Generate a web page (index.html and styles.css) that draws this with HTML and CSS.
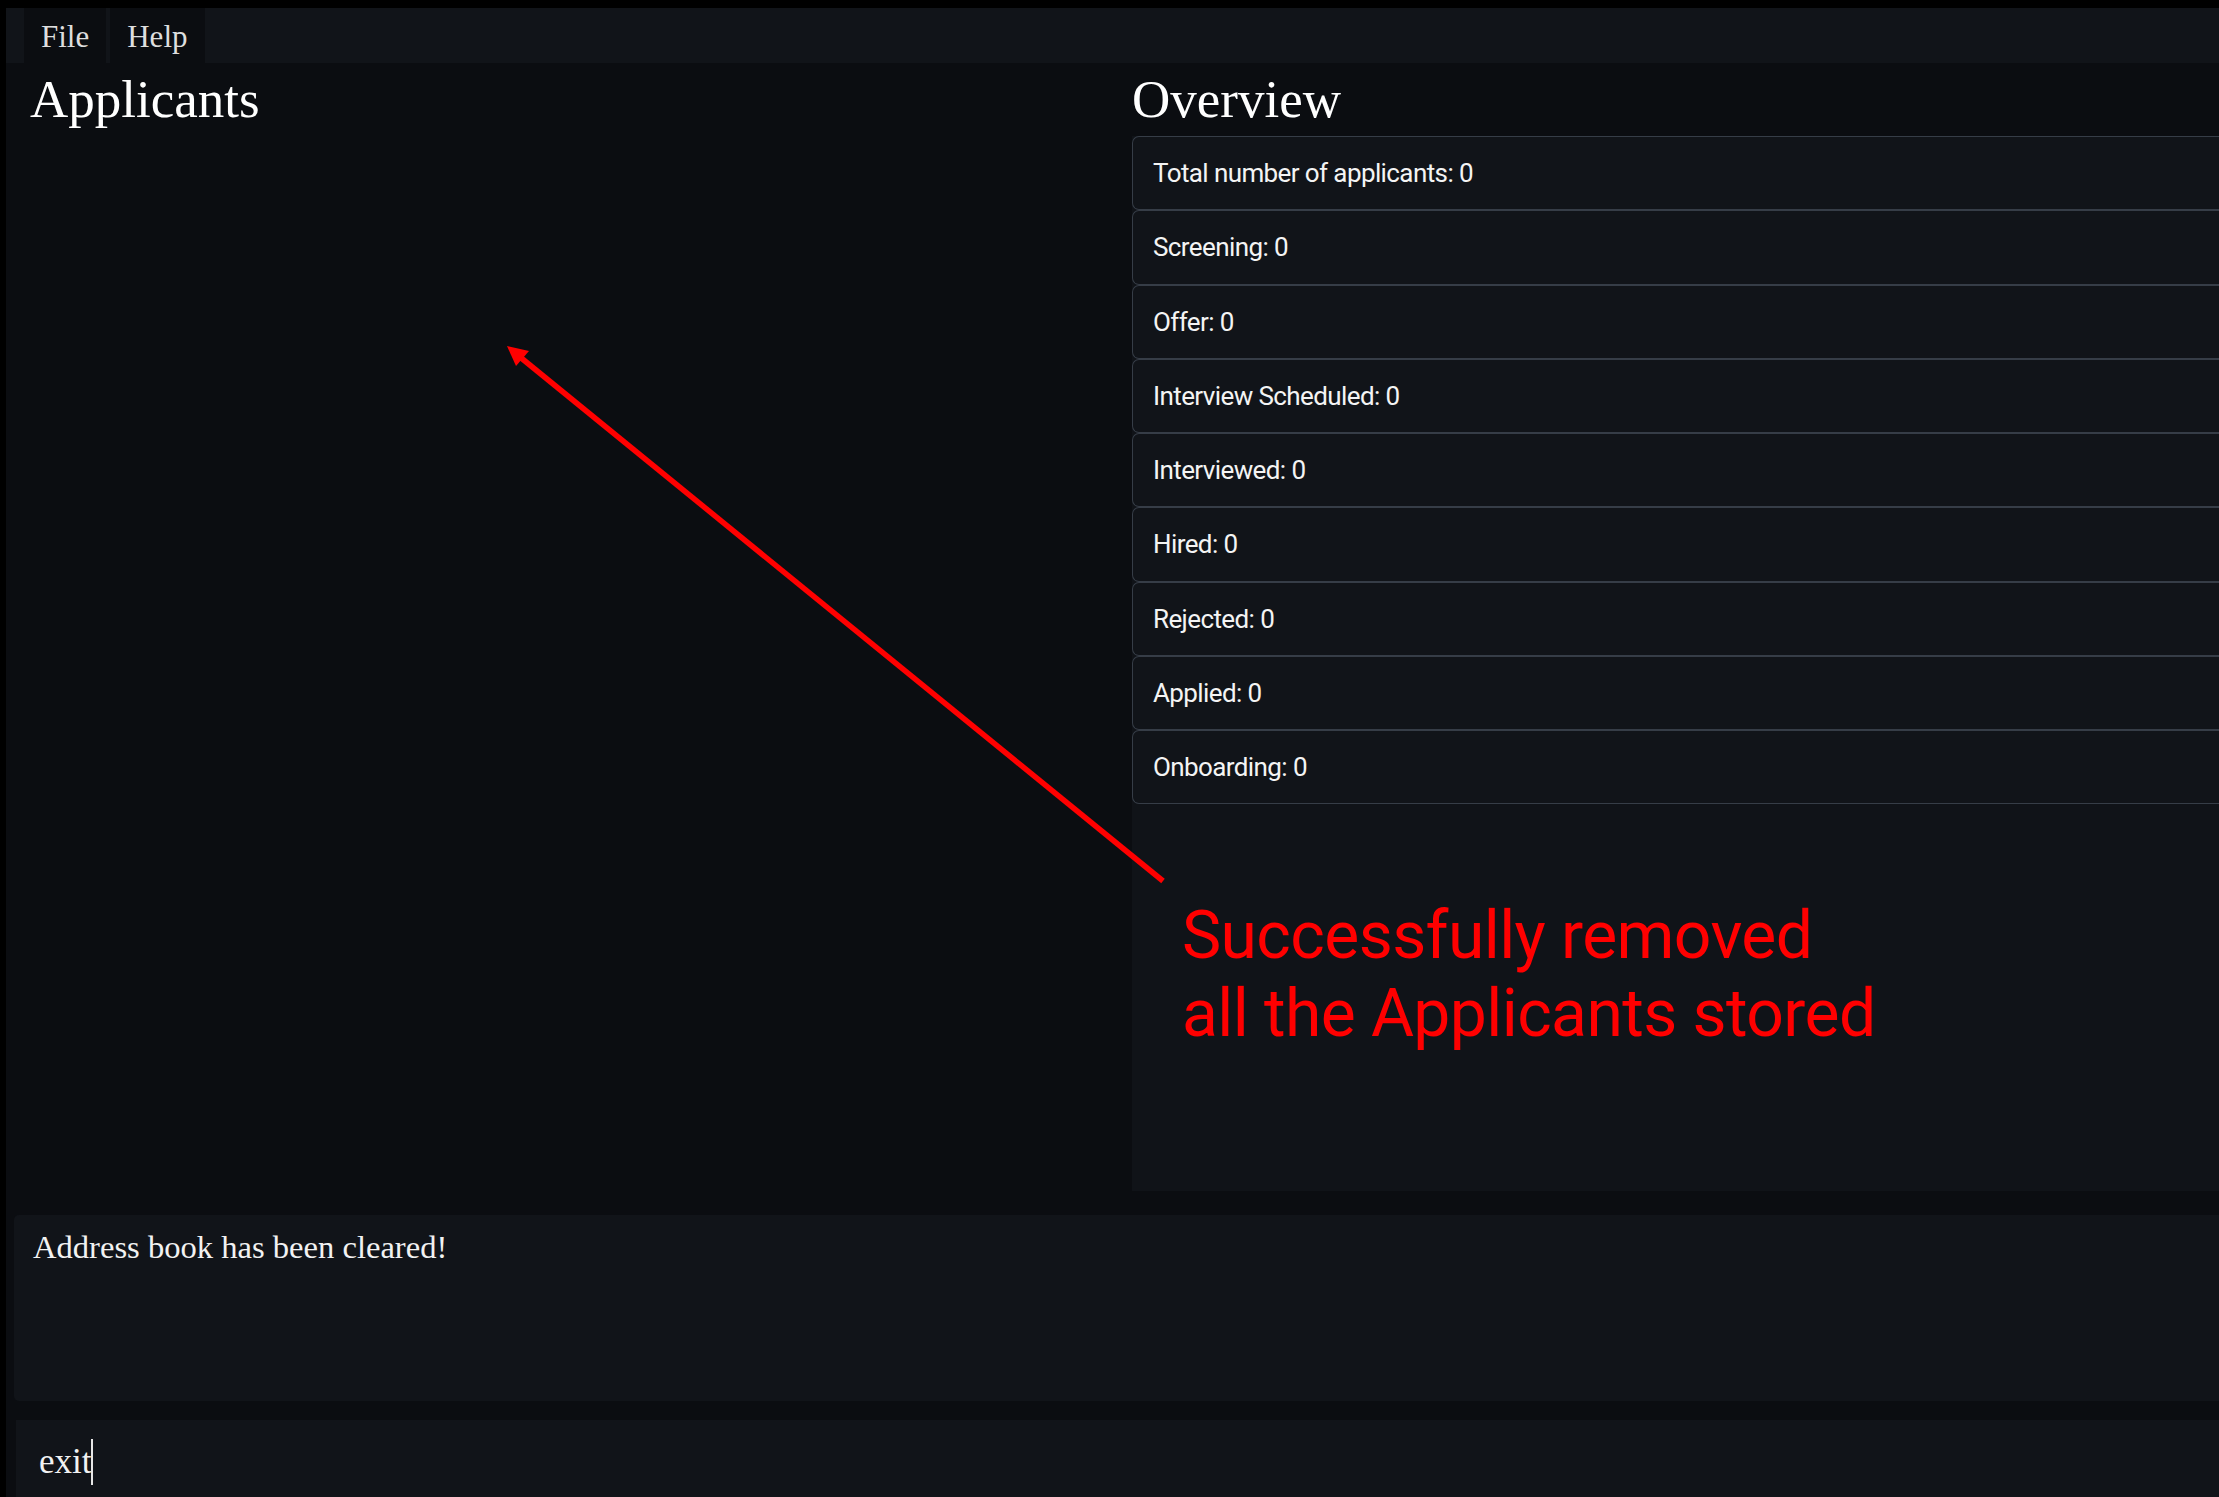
FILE: index.html
```html
<!DOCTYPE html>
<html lang="en">
<head>
<meta charset="utf-8">
<title>Applicants</title>
<link rel="stylesheet" href="styles.css">
</head>
<body>
<div class="app">
  <nav class="menubar">
    <div class="menu-item">File</div>
    <div class="menu-item">Help</div>
  </nav>
  <div class="main">
    <section class="pane pane-left">
      <h2 class="pane-title">Applicants</h2>
    </section>
    <section class="pane pane-right">
      <h2 class="pane-title">Overview</h2>
      <div class="stat-list">
        <div class="stat-card">Total number of applicants: 0</div>
        <div class="stat-card">Screening: 0</div>
        <div class="stat-card">Offer: 0</div>
        <div class="stat-card">Interview Scheduled: 0</div>
        <div class="stat-card">Interviewed: 0</div>
        <div class="stat-card">Hired: 0</div>
        <div class="stat-card">Rejected: 0</div>
        <div class="stat-card">Applied: 0</div>
        <div class="stat-card">Onboarding: 0</div>
      </div>
    </section>
  </div>
  <div class="result-box">Address book has been cleared!</div>
  <div class="command-box"><span class="command-text">exit</span><span class="caret"></span></div>
</div>

<svg class="annot-arrow" width="2219" height="1497" viewBox="0 0 2219 1497" xmlns="http://www.w3.org/2000/svg">
  <line x1="1163" y1="881" x2="520" y2="357" stroke="#ff0000" stroke-width="5.5"/>
  <polygon points="507,346 529,351 516,366" fill="#ff0000"/>
</svg>
<div class="annot-text">
  <div class="annot-line">Successfully removed</div>
  <div class="annot-line">all the Applicants stored</div>
</div>
</body>
</html>
```

FILE: styles.css
```css
html, body {
  margin: 0;
  padding: 0;
  background: #000000;
}

body {
  position: relative;
  width: 2219px;
  height: 1497px;
  overflow: hidden;
}

.app {
  margin: 8px 0 0 6px;
  height: 1489px;
  background: #0b0d11;
  display: flex;
  flex-direction: column;
  font-family: "Liberation Serif", "DejaVu Serif", serif;
  color: #ffffff;
}

.menubar {
  display: flex;
  gap: 4px;
  height: 55px;
  padding-left: 18px;
  background: #111419;
  flex: none;
}

.menu-item {
  padding: 3px 17px 0 17px;
  background: #0b0d11;
  color: #dedede;
  font-size: 31px;
  line-height: 52px;
}

.main {
  display: grid;
  grid-template-columns: 1126px 1fr;
  height: 1128px;
  flex: none;
}

.pane-title {
  margin: 0;
  font-weight: normal;
  font-size: 53px;
  line-height: 73px;
  color: #ffffff;
}

.pane-left {
  padding-left: 24px;
}

.pane-right {
  display: flex;
  flex-direction: column;
}

.stat-list {
  flex: 1;
  background: #101318;
  display: flex;
  flex-direction: column;
}

.stat-card {
  box-sizing: border-box;
  height: 74.25px;
  flex: none;
  display: flex;
  align-items: center;
  padding-left: 20px;
  border: 1px solid #363d47;
  border-right: none;
  border-radius: 7px 0 0 7px;
  background: #111419;
  font-family: Roboto, "Liberation Sans", sans-serif;
  font-size: 26px;
  letter-spacing: -0.6px;
  color: #f4f4f4;
}

.result-box {
  margin: 24px 0 0 8px;
  height: 186px;
  box-sizing: border-box;
  padding: 12px 19px;
  background: #111419;
  border-radius: 5px 0 0 5px;
  font-size: 32.6px;
  line-height: 40px;
  color: #f2f2f2;
  flex: none;
}

.command-box {
  margin: 19px 0 0 10px;
  flex: 1;
  background: #111419;
  display: flex;
  align-items: flex-start;
  padding: 17px 0 0 23px;
}

.command-text {
  font-size: 35px;
  line-height: 50px;
  color: #f2f2f2;
}

.caret {
  display: inline-block;
  width: 2px;
  height: 46px;
  margin-top: 2px;
  background: #e6e6e6;
}

.annot-arrow {
  position: absolute;
  left: 0;
  top: 0;
  pointer-events: none;
}

.annot-text {
  position: absolute;
  left: 1182px;
  top: 897px;
  font-family: Roboto, "Liberation Sans", sans-serif;
  font-size: 66px;
  letter-spacing: -0.6px;
  color: #ff0000;
  white-space: nowrap;
}

.annot-line {
  line-height: 78px;
}
```
